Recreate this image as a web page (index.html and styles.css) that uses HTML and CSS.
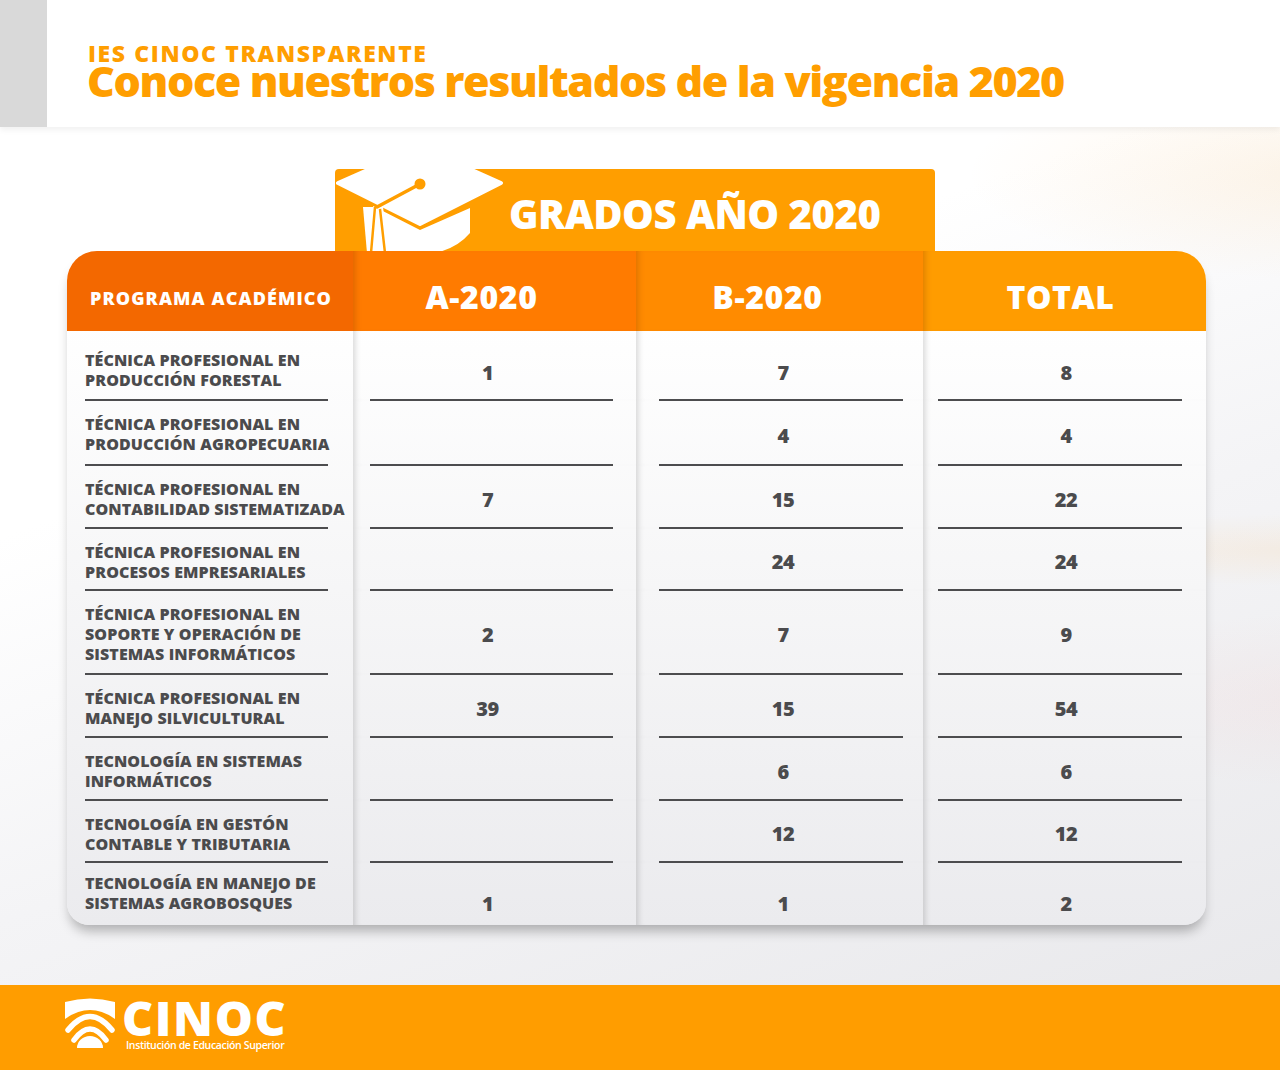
FILE: index.html
```html
<!DOCTYPE html>
<html lang="es">
<head>
<meta charset="utf-8">
<title>IES CINOC Transparente - Grados 2020</title>
<link rel="stylesheet" href="styles.css">
</head>
<body>
<div class="page">
  <header class="top">
    <div class="strip"></div>
    <div class="titles">
      <div class="kicker">IES CINOC TRANSPARENTE</div>
      <h1 class="title">Conoce nuestros resultados de la vigencia 2020</h1>
    </div>
  </header>

  <main class="content">
    <div class="banner">
      <svg class="cap" width="170" height="82" viewBox="0 0 170 82" aria-hidden="true">
        <path d="M28 38 L48 38 L54 84 L32 84 Z" fill="#fff"/>
        <path d="M38 37 L85 61 L135 39 L135 64 Q118 84 85 86 L38 86 Z" fill="#fff"/>
        <path d="M3 14 L85 -22 L166 14 L85 55 Z" fill="#fff" stroke="#fff" stroke-width="4" stroke-linejoin="round"/>
        <circle cx="85" cy="15" r="5.5" fill="#ff9e00"/>
        <path d="M85 15 L42 38" stroke="#ff9e00" stroke-width="3.5" stroke-linecap="round" fill="none"/>
        <path d="M40 38 L36 84 M45 40 L50 84" stroke="#ff9e00" stroke-width="2.5" fill="none"/>
      </svg>
      <span class="banner-text">GRADOS AÑO 2020</span>
    </div>

    <div class="table">
      <div class="th th1">PROGRAMA ACADÉMICO</div>
      <div class="th th2 sep">A-2020</div>
      <div class="th th3 sep">B-2020</div>
      <div class="th th4 sep">TOTAL</div>

      <div class="cell prog first"><p class="name">TÉCNICA PROFESIONAL EN<br>PRODUCCIÓN FORESTAL</p><i class="rule"></i></div>
      <div class="cell num c2 sep first"><span class="val">1</span><i class="rule"></i></div>
      <div class="cell num c3 sep first"><span class="val">7</span><i class="rule"></i></div>
      <div class="cell num c4 sep first"><span class="val">8</span><i class="rule"></i></div>

      <div class="cell prog"><p class="name">TÉCNICA PROFESIONAL EN<br>PRODUCCIÓN AGROPECUARIA</p><i class="rule"></i></div>
      <div class="cell num c2 sep"><span class="val"></span><i class="rule"></i></div>
      <div class="cell num c3 sep"><span class="val">4</span><i class="rule"></i></div>
      <div class="cell num c4 sep"><span class="val">4</span><i class="rule"></i></div>

      <div class="cell prog"><p class="name">TÉCNICA PROFESIONAL EN<br>CONTABILIDAD SISTEMATIZADA</p><i class="rule"></i></div>
      <div class="cell num c2 sep"><span class="val">7</span><i class="rule"></i></div>
      <div class="cell num c3 sep"><span class="val">15</span><i class="rule"></i></div>
      <div class="cell num c4 sep"><span class="val">22</span><i class="rule"></i></div>

      <div class="cell prog"><p class="name">TÉCNICA PROFESIONAL EN<br>PROCESOS EMPRESARIALES</p><i class="rule"></i></div>
      <div class="cell num c2 sep"><span class="val"></span><i class="rule"></i></div>
      <div class="cell num c3 sep"><span class="val">24</span><i class="rule"></i></div>
      <div class="cell num c4 sep"><span class="val">24</span><i class="rule"></i></div>

      <div class="cell prog"><p class="name">TÉCNICA PROFESIONAL EN<br>SOPORTE Y OPERACIÓN DE<br>SISTEMAS INFORMÁTICOS</p><i class="rule"></i></div>
      <div class="cell num c2 sep"><span class="val">2</span><i class="rule"></i></div>
      <div class="cell num c3 sep"><span class="val">7</span><i class="rule"></i></div>
      <div class="cell num c4 sep"><span class="val">9</span><i class="rule"></i></div>

      <div class="cell prog"><p class="name">TÉCNICA PROFESIONAL EN<br>MANEJO SILVICULTURAL</p><i class="rule"></i></div>
      <div class="cell num c2 sep"><span class="val">39</span><i class="rule"></i></div>
      <div class="cell num c3 sep"><span class="val">15</span><i class="rule"></i></div>
      <div class="cell num c4 sep"><span class="val">54</span><i class="rule"></i></div>

      <div class="cell prog"><p class="name">TECNOLOGÍA EN SISTEMAS<br>INFORMÁTICOS</p><i class="rule"></i></div>
      <div class="cell num c2 sep"><span class="val"></span><i class="rule"></i></div>
      <div class="cell num c3 sep"><span class="val">6</span><i class="rule"></i></div>
      <div class="cell num c4 sep"><span class="val">6</span><i class="rule"></i></div>

      <div class="cell prog"><p class="name">TECNOLOGÍA EN GESTÓN<br>CONTABLE Y TRIBUTARIA</p><i class="rule"></i></div>
      <div class="cell num c2 sep"><span class="val"></span><i class="rule"></i></div>
      <div class="cell num c3 sep"><span class="val">12</span><i class="rule"></i></div>
      <div class="cell num c4 sep"><span class="val">12</span><i class="rule"></i></div>

      <div class="cell prog last"><p class="name">TECNOLOGÍA EN MANEJO DE<br>SISTEMAS AGROBOSQUES</p></div>
      <div class="cell num c2 sep last"><span class="val">1</span></div>
      <div class="cell num c3 sep last"><span class="val">1</span></div>
      <div class="cell num c4 sep last"><span class="val">2</span></div>
    </div>
  </main>

  <footer class="foot">
    <svg class="logo-mark" width="54" height="54" viewBox="0 0 54 54" aria-hidden="true">
      <path d="M2 4 Q27 -3 52 4 L52 21 Q27 3 2 21 Z" fill="#fff"/>
      <path d="M5 32 Q27 5 49 32" stroke="#fff" stroke-width="5.5" fill="none" stroke-linecap="round"/>
      <path d="M11 42 Q27 20 43 42" stroke="#fff" stroke-width="5.5" fill="none" stroke-linecap="round"/>
      <path d="M14 50 A13 12 0 0 1 40 50 Z" fill="#fff"/>
    </svg>
    <div class="logo-text">
      <div class="logo-name">CINOC</div>
      <div class="logo-sub">Institución de Educación Superior</div>
    </div>
  </footer>
</div>
</body>
</html>
```

FILE: styles.css
```css
html, body {
  margin: 0;
  padding: 0;
}

body {
  font-family: "Open Sans", "Liberation Sans", sans-serif;
  background: #ffffff;
}

.page {
  width: 1280px;
  height: 1070px;
  display: flex;
  flex-direction: column;
  overflow: hidden;
  background:
    radial-gradient(ellipse 520px 150px at 1330px 175px, rgba(255, 175, 70, 0.12), rgba(255, 175, 70, 0) 70%),
    radial-gradient(ellipse 360px 45px at 1300px 550px, rgba(255, 175, 70, 0.10), rgba(255, 175, 70, 0) 80%),
    radial-gradient(ellipse 380px 110px at 1330px 700px, rgba(255, 120, 110, 0.06), rgba(255, 120, 110, 0) 80%),
    linear-gradient(160deg, #ffffff 35%, #f4f4f6 60%, #e7e7ea 100%);
}

/* Header */
.top {
  height: 127px;
  flex: none;
  display: flex;
  background: #ffffff;
  box-shadow: 0 3px 6px rgba(0, 0, 0, 0.06);
  position: relative;
  z-index: 1;
}

.strip {
  width: 47px;
  background: #d9d9d9;
}

.titles {
  padding: 44px 0 0 41px;
  color: #ff9e00;
}

.kicker {
  font-size: 23px;
  line-height: 18px;
  font-weight: 800;
  letter-spacing: 1.6px;
}

.title {
  margin: 1px 0 0 -1px;
  font-size: 43px;
  line-height: 36px;
  font-weight: 800;
  letter-spacing: -1.4px;
}

/* Content */
.content {
  flex: 1;
  padding: 42px 0 0 67px;
}

.banner {
  margin-left: 268px;
  width: 600px;
  height: 82px;
  background: #ff9e00;
  border-radius: 4px 4px 0 0;
  display: flex;
  align-items: center;
  overflow: hidden;
}

.cap {
  flex: none;
  align-self: flex-end;
}

.banner-text {
  margin-left: 4px;
  padding-top: 7px;
  color: #ffffff;
  font-size: 40px;
  font-weight: 800;
  letter-spacing: -0.5px;
}

/* Table */
.table {
  width: 1139px;
  display: grid;
  grid-template-columns: 286px 283px 287px 283px;
  grid-template-rows: 80px 69px 65px 63px 62px 84px 63px 63px 62px 63px;
  border-radius: 30px 30px 22px 22px;
  overflow: hidden;
  background: linear-gradient(180deg, #ffffff 10%, #f6f6f7 50%, #ebebee 100%);
  box-shadow: 0 9px 12px -3px rgba(0, 0, 0, 0.28);
}

.th {
  color: #ffffff;
  font-weight: 800;
  display: flex;
  align-items: center;
  justify-content: center;
  padding-top: 10px;
  box-sizing: border-box;
  font-size: 32px;
  letter-spacing: 0.6px;
}

.th1 {
  background: #f36800;
  justify-content: flex-start;
  padding-left: 23px;
  padding-top: 14px;
  font-size: 18px;
  letter-spacing: 1.1px;
}

.th2 { background: #ff7b00; padding-right: 26px; }
.th3 { background: #ff8b00; padding-right: 24px; }
.th4 { background: #ff9c00; padding-right: 8px; }

.sep {
  box-shadow: inset 7px 0 6px -5px rgba(0, 0, 0, 0.16);
}

.th.sep {
  box-shadow: inset 7px 0 6px -5px rgba(120, 40, 0, 0.25);
}

.cell {
  display: flex;
  flex-direction: column;
  box-sizing: border-box;
  color: #4b4b4d;
  font-weight: 800;
}

.prog {
  padding: 14px 25px 0 18px;
}

.prog.first { padding-top: 19px; }
.prog.last { padding-top: 11px; }

.name {
  margin: 0;
  flex: 1;
  font-size: 16px;
  line-height: 20px;
  white-space: nowrap;
  letter-spacing: 0.1px;
}

.rule {
  display: block;
  flex: none;
  height: 2px;
  margin-bottom: -1px;
  background: #4d4d4f;
}

.c2 { padding: 0 23px 0 17px; }
.c3 { padding: 0 20px 0 23px; }
.c4 { padding: 0 24px 0 15px; }

.val {
  flex: 1;
  display: flex;
  align-items: center;
  justify-content: center;
  padding-top: 6px;
  font-size: 20px;
  letter-spacing: -0.5px;
}

.c2 .val { padding-right: 8px; }
.c3 .val { padding-left: 4px; }
.c4 .val { padding-left: 12px; }

.first .val { padding-top: 14px; }
.last .val { padding-top: 20px; }

/* Footer */
.foot {
  height: 85px;
  flex: none;
  background: #ff9d00;
  display: flex;
  align-items: flex-start;
  padding: 13px 0 0 63px;
  box-sizing: border-box;
}

.logo-mark {
  flex: none;
}

.logo-text {
  margin-left: 5px;
  color: #ffffff;
}

.logo-name {
  font-size: 48px;
  line-height: 38px;
  font-weight: 800;
  letter-spacing: 1.6px;
  margin-top: 1px;
}

.logo-sub {
  margin: 2px 0 0 4px;
  font-size: 10.5px;
  line-height: 12px;
  font-weight: 600;
  letter-spacing: -0.35px;
}
```
